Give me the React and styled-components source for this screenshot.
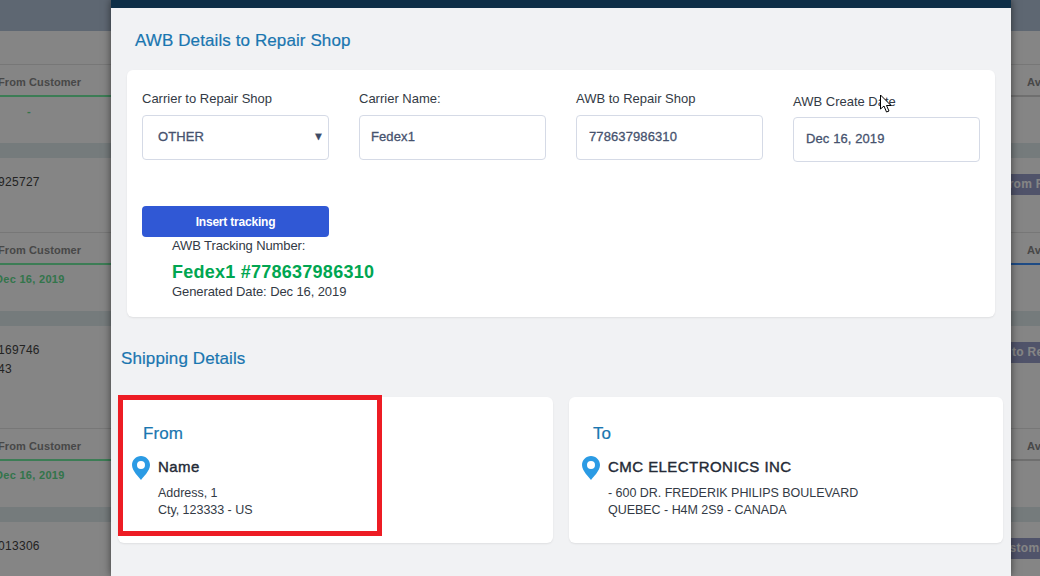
import React from 'react'
import styled, { createGlobalStyle } from 'styled-components'

const GlobalStyle = createGlobalStyle`
    html, body {
        margin: 0;
        padding: 0;
        height: 100%;
        overflow: hidden;
        font-family: "Liberation Sans", Arial, sans-serif;
    }
`;

const Page = styled.div`
    position: relative;
    width: 1040px;
    height: 576px;
    overflow: hidden;
    background: #fff;
`;

const TopBar = styled.div`
    height: 31px;
    background: #b4c6da;
`;

const Section = styled.div`
    height: ${p => p.$height}px;
    display: flex;
    flex-direction: column;
    overflow: hidden;
`;

const Band = styled.div`
    height: 15px;
    background: #e1ebed;
`;

const InfoRow = styled.div`
    height: ${p => p.$height}px;
    flex: none;
    display: flex;
    justify-content: space-between;
    box-sizing: border-box;
    padding-top: 16px;
`;

const OrderNo = styled.div`
    margin: -1px 0 0 -2px;
    font-size: 12px;
    line-height: 19px;
    letter-spacing: 0.3px;
    color: #444;
`;

const StatusBadge = styled.div`
    width: 110px;
    height: 21px;
    flex: none;
    box-sizing: border-box;
    padding-left: ${p => p.$offset}px;
    background: #9aa0cc;
    color: #fff;
    font-size: 12px;
    font-weight: bold;
    line-height: 21px;
    letter-spacing: 0.3px;
    white-space: nowrap;
`;

const HeadRow = styled.div`
    height: 33px;
    flex: none;
    display: flex;
    justify-content: space-between;
    align-items: center;
    box-sizing: border-box;
    padding-top: 1px;
    font-size: 11px;
    font-weight: bold;
    letter-spacing: 0.1px;
    color: #8a8a8a;
    border-top: 1px solid #e4e4e4;
    background:
        linear-gradient(to right, #74f0a4 0 1011px, ${p => p.$right} 1011px) bottom / 100% 2px no-repeat;
`;

const HeadCell = styled.span`
    margin-left: ${p => p.$left || 0}px;
    width: ${p => p.$width || 'auto'};
`;

const ValueRow = styled.div`
    padding-top: 8px;
    margin-left: ${p => p.$left || 0}px;
    font-size: 11px;
    font-weight: bold;
    letter-spacing: 0.3px;
    color: #62e090;
`;

const Scrim = styled.div`
    position: absolute;
    inset: 0;
    background: rgba(0, 0, 0, 0.48);
`;

const Modal = styled.div`
    position: absolute;
    top: 0;
    left: 111px;
    width: 900px;
    height: 576px;
    box-sizing: border-box;
    background: #f1f2f4;
    border-top: 8px solid #0e2f47;
    box-shadow: 0 0 8px rgba(0, 0, 0, 0.55);
`;

const Heading = styled.h3`
    margin: 0;
    font-size: 17px;
    font-weight: normal;
    line-height: 20px;
    letter-spacing: 0.1px;
    color: #1a76b0;
    -webkit-text-stroke: 0.2px #1a76b0;
`;

const AwbHeading = styled(Heading)`
    padding: 23px 0 0 24px;
`;

const ShippingHeading = styled(Heading)`
    padding: 32px 0 0 10px;
`;

const AwbCard = styled.div`
    margin: 19px 0 0 16px;
    width: 868px;
    height: 247px;
    box-sizing: border-box;
    padding: 21px 15px 0;
    background: #fff;
    border-radius: 6px;
    box-shadow: 0 1px 2px rgba(0, 0, 0, 0.08);
`;

const FieldGrid = styled.div`
    display: grid;
    grid-template-columns: repeat(4, 187px);
    column-gap: 30px;
    height: 115px;
`;

const Field = styled.div`
    margin-top: ${p => p.$nudge || 0}px;
`;

const Label = styled.div`
    height: 16px;
    margin-bottom: ${p => p.$gap || 8}px;
    font-size: 13px;
    line-height: 16px;
    color: #333a45;
`;

const ValueBox = styled.div`
    position: relative;
    height: 45px;
    box-sizing: border-box;
    padding-left: ${p => p.$pad}px;
    border: 1px solid #d5dae6;
    border-radius: 4px;
    background: #fff;
    font-size: 13px;
    line-height: 41px;
    letter-spacing: 0.1px;
    color: #46526e;
    -webkit-text-stroke: 0.3px #46526e;
`;

const SelectArrow = styled.span`
    position: absolute;
    top: 0;
    right: 4px;
    font-size: 11px;
    line-height: 41px;
    letter-spacing: 0;
    color: #3d4a66;
`;

const InsertButton = styled.button`
    display: block;
    width: 187px;
    height: 31px;
    padding: 0;
    border: none;
    border-radius: 4px;
    background: #3058d5;
    color: #fff;
    font-family: inherit;
    font-size: 12px;
    font-weight: bold;
    letter-spacing: -0.2px;
`;

const Tracking = styled.div`
    padding: 1px 0 0 30px;
    font-size: 13px;
    letter-spacing: -0.1px;
    color: #333a45;
`;

const TrackingLine = styled.div`
    line-height: 16px;
`;

const TrackingNumber = styled.div`
    margin: 7px 0 1px;
    font-size: 18px;
    font-weight: bold;
    line-height: 22px;
    letter-spacing: 0.25px;
    color: #00a651;
`;

const AddressRow = styled.div`
    display: flex;
    gap: 16px;
    margin: 28px 0 0 7px;
`;

const AddressCard = styled.div`
    width: ${p => p.$width}px;
    height: 146px;
    box-sizing: border-box;
    padding: 27px 0 0 ${p => p.$pad}px;
    background: #fff;
    border-radius: 6px;
    box-shadow: 0 1px 2px rgba(0, 0, 0, 0.08);
`;

const AddressTitle = styled(Heading)`
    padding-left: 11px;
    margin-bottom: 12px;
`;

const AddressBody = styled.div`
    display: flex;
    gap: 8px;
`;

const PinIcon = styled.svg`
    flex: none;
    width: 18px;
    height: 24px;
`;

const AddressName = styled.div`
    font-size: 15px;
    line-height: 20px;
    letter-spacing: 0.45px;
    color: #232a36;
    -webkit-text-stroke: 0.4px #232a36;
    margin: 1px 0 8px;
`;

const AddressLine = styled.div`
    font-size: 12.5px;
    line-height: 17px;
    letter-spacing: -0.03px;
    color: #333a45;
`;

const Highlight = styled.div`
    position: absolute;
    left: 118px;
    top: 395px;
    width: 264px;
    height: 141px;
    box-sizing: border-box;
    border: 5px solid #ed1c24;
`;

const Cursor = styled.svg`
    position: absolute;
    left: 879px;
    top: 94px;
    width: 15px;
    height: 20px;
`;

function Pin() {
    return (
        <PinIcon viewBox="0 0 18 24">
            <path
                fill="#2b9be4"
                fillRule="evenodd"
                d="M9 0C4 0 0 4 0 9c0 6 7 12 9 15 2-3 9-9 9-15 0-5-4-9-9-9zm0 5a4 4 0 1 1 0 8 4 4 0 0 1 0-8z"
            />
        </PinIcon>
    )
}

function App() {
    return (
        <Page>
            <GlobalStyle />

            <TopBar />
            <Section $height={112}>
                <InfoRow $height={33} />
                <HeadRow $right="#d5d5d5">
                    <HeadCell $left={-2}>From Customer</HeadCell>
                    <HeadCell $width="13px">Av</HeadCell>
                </HeadRow>
                <ValueRow $left={27}>-</ValueRow>
            </Section>
            <Band />
            <Section $height={153}>
                <InfoRow $height={74}>
                    <OrderNo>925727</OrderNo>
                    <StatusBadge $offset={71}>From Repair</StatusBadge>
                </InfoRow>
                <HeadRow $right="#3a90ff">
                    <HeadCell $left={-2}>From Customer</HeadCell>
                    <HeadCell $width="13px">Av</HeadCell>
                </HeadRow>
                <ValueRow $left={-5}>Dec 16, 2019</ValueRow>
            </Section>
            <Band />
            <Section $height={181}>
                <InfoRow $height={102}>
                    <OrderNo>169746<br />43</OrderNo>
                    <StatusBadge $offset={82}>to Repair</StatusBadge>
                </InfoRow>
                <HeadRow $right="#d5d5d5">
                    <HeadCell $left={-2}>From Customer</HeadCell>
                    <HeadCell $width="13px">Av</HeadCell>
                </HeadRow>
                <ValueRow $left={-5}>Dec 16, 2019</ValueRow>
            </Section>
            <Band />
            <Section $height={54}>
                <InfoRow $height={54}>
                    <OrderNo>013306</OrderNo>
                    <StatusBadge $offset={63}>Customer</StatusBadge>
                </InfoRow>
            </Section>

            <Scrim />

            <Modal>
                <AwbHeading>AWB Details to Repair Shop</AwbHeading>
                <AwbCard>
                    <FieldGrid>
                        <Field>
                            <Label>Carrier to Repair Shop</Label>
                            <ValueBox $pad={15}>
                                OTHER
                                <SelectArrow>▼</SelectArrow>
                            </ValueBox>
                        </Field>
                        <Field>
                            <Label>Carrier Name:</Label>
                            <ValueBox $pad={11}>Fedex1</ValueBox>
                        </Field>
                        <Field>
                            <Label>AWB to Repair Shop</Label>
                            <ValueBox $pad={12}>778637986310</ValueBox>
                        </Field>
                        <Field $nudge={3}>
                            <Label $gap={7}>AWB Create Date</Label>
                            <ValueBox $pad={12}>Dec 16, 2019</ValueBox>
                        </Field>
                    </FieldGrid>
                    <InsertButton>Insert tracking</InsertButton>
                    <Tracking>
                        <TrackingLine>AWB Tracking Number:</TrackingLine>
                        <TrackingNumber>Fedex1 #778637986310</TrackingNumber>
                        <TrackingLine>Generated Date: Dec 16, 2019</TrackingLine>
                    </Tracking>
                </AwbCard>

                <ShippingHeading>Shipping Details</ShippingHeading>
                <AddressRow>
                    <AddressCard $width={435} $pad={14}>
                        <AddressTitle>From</AddressTitle>
                        <AddressBody>
                            <Pin />
                            <div>
                                <AddressName>Name</AddressName>
                                <AddressLine>Address, 1</AddressLine>
                                <AddressLine>Cty, 123333 - US</AddressLine>
                            </div>
                        </AddressBody>
                    </AddressCard>
                    <AddressCard $width={434} $pad={13}>
                        <AddressTitle>To</AddressTitle>
                        <AddressBody>
                            <Pin />
                            <div>
                                <AddressName>CMC ELECTRONICS INC</AddressName>
                                <AddressLine>- 600 DR. FREDERIK PHILIPS BOULEVARD</AddressLine>
                                <AddressLine>QUEBEC - H4M 2S9 - CANADA</AddressLine>
                            </div>
                        </AddressBody>
                    </AddressCard>
                </AddressRow>
            </Modal>

            <Highlight />

            <Cursor viewBox="0 0 15 20">
                <path
                    fill="#fff"
                    stroke="#000"
                    strokeWidth="1"
                    d="M1.500 1v14l3.500-3 2.500 6 2.500-1-2.500-5.500h4.500z"
                />
            </Cursor>
        </Page>
    )
}

export default App
